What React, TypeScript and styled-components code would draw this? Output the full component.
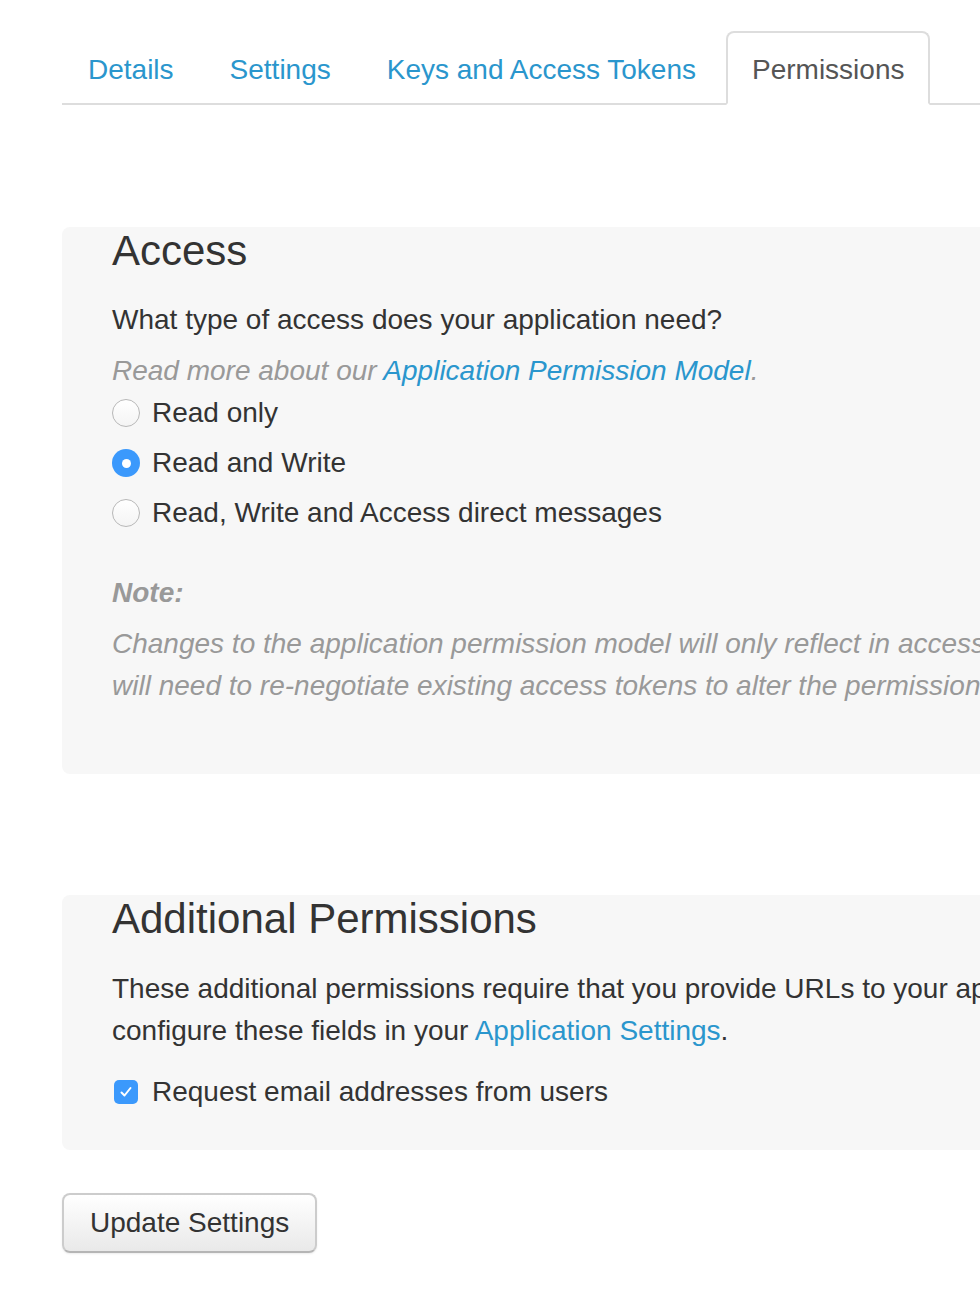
import React, { useState } from "react";
import styled, { createGlobalStyle } from "styled-components";

const GlobalStyle = createGlobalStyle`
  html, body {
    margin: 0;
    padding: 0;
    background: #fff;
    overflow: hidden;
  }
  body {
    font-family: "Liberation Sans", Arial, Helvetica, sans-serif;
    color: #333;
  }
`;

const Page = styled.div`
  width: 1500px;
  padding: 31px 0 60px 62px;
  box-sizing: border-box;
`;

const Tabs = styled.ul`
  display: flex;
  list-style: none;
  margin: 0;
  padding: 0;
  border-bottom: 2px solid #ddd;
`;

const Tab = styled.li<{ $active?: boolean }>`
  margin: 0 4px -2px 0;
  padding: 3px 24px 0;
  height: 67px;
  display: flex;
  align-items: center;
  font-size: 28px;
  border: 2px solid ${(p) => (p.$active ? "#ddd" : "transparent")};
  border-bottom-color: ${(p) => (p.$active ? "#fff" : "transparent")};
  border-radius: 8px 8px 0 0;
  background: ${(p) => (p.$active ? "#fff" : "transparent")};
  color: ${(p) => (p.$active ? "#555" : "#2a96cd")};
  cursor: pointer;
`;

const Panel = styled.section<{ $top: number; $bottom: number }>`
  margin-top: ${(p) => p.$top}px;
  background: #f7f7f7;
  border-radius: 8px;
  padding: 0 50px ${(p) => p.$bottom}px;
`;

const Heading = styled.h2`
  margin: 0;
  font-size: 42px;
  line-height: 48px;
  font-weight: normal;
  color: #333;
`;

const Text = styled.p<{ $gap?: number; $muted?: boolean }>`
  margin: ${(p) => p.$gap ?? 0}px 0 0;
  font-size: 28px;
  line-height: 42px;
  white-space: nowrap;
  color: ${(p) => (p.$muted ? "#999" : "#333")};
  font-style: ${(p) => (p.$muted ? "italic" : "normal")};
`;

const NoteTitle = styled.p`
  margin: 38px 0 0;
  font-size: 28px;
  line-height: 42px;
  font-style: italic;
  font-weight: bold;
  color: #999;
`;

const Link = styled.a`
  color: #2a96cd;
  text-decoration: none;
`;

const Option = styled.label<{ $gap: number; $space?: number }>`
  display: flex;
  align-items: center;
  gap: ${(p) => p.$space ?? 12}px;
  margin-top: ${(p) => p.$gap}px;
  height: 42px;
  font-size: 28px;
  color: #333;
  cursor: pointer;
`;

const Radio = styled.span<{ $on: boolean }>`
  width: 28px;
  height: 28px;
  box-sizing: border-box;
  border-radius: 50%;
  display: flex;
  align-items: center;
  justify-content: center;
  background: ${(p) => (p.$on ? "#3b99fc" : "linear-gradient(#fff, #f4f4f4)")};
  border: ${(p) => (p.$on ? "none" : "1.5px solid #b8b8b8")};
  &::after {
    content: "";
    width: 9px;
    height: 9px;
    border-radius: 50%;
    background: #fff;
    display: ${(p) => (p.$on ? "block" : "none")};
  }
`;

const Check = styled.span<{ $on: boolean }>`
  width: 24px;
  height: 24px;
  box-sizing: border-box;
  margin-left: 2px;
  border-radius: 5px;
  background: ${(p) => (p.$on ? "#3b99fc" : "#fff")};
  border: ${(p) => (p.$on ? "none" : "1.5px solid #b8b8b8")};
  display: flex;
  align-items: center;
  justify-content: center;
`;

const Button = styled.button`
  margin-top: 43px;
  height: 60px;
  padding: 0 26px;
  font-family: inherit;
  font-size: 28px;
  color: #333;
  background: linear-gradient(#fff, #e9e9e9);
  border: 2px solid #ccc;
  border-bottom-color: #b5b5b5;
  border-radius: 8px;
  box-shadow: 0 1px 2px rgba(0, 0, 0, 0.08);
  cursor: pointer;
`;

const options = [
  "Read only",
  "Read and Write",
  "Read, Write and Access direct messages",
];

export default function App() {
  const [access, setAccess] = useState(1);
  const [email, setEmail] = useState(true);

  return (
    <Page>
      <GlobalStyle />
      <Tabs>
        <Tab>Details</Tab>
        <Tab>Settings</Tab>
        <Tab>Keys and Access Tokens</Tab>
        <Tab $active>Permissions</Tab>
      </Tabs>

      <Panel $top={122} $bottom={67}>
        <Heading>Access</Heading>
        <Text $gap={24}>What type of access does your application need?</Text>
        <Text $gap={9} $muted>
          Read more about our <Link href="#">Application Permission Model</Link>.
        </Text>
        {options.map((o, i) => (
          <Option key={o} $gap={i === 0 ? 0 : 8} onClick={() => setAccess(i)}>
            <Radio $on={access === i} />
            {o}
          </Option>
        ))}
        <NoteTitle>Note:</NoteTitle>
        <Text $gap={9} $muted>
          Changes to the application permission model will only reflect in access tokens obtained after the permission model change is saved. You
          <br />
          will need to re-negotiate existing access tokens to alter the permission level associated with each of your application's users.
        </Text>
      </Panel>

      <Panel $top={121} $bottom={37}>
        <Heading>Additional Permissions</Heading>
        <Text $gap={25}>
          These additional permissions require that you provide URLs to your application's privacy policy and terms of service. You can
          <br />
          configure these fields in your <Link href="#">Application Settings</Link>.
        </Text>
        <Option $gap={19} $space={14} onClick={() => setEmail(!email)}>
          <Check $on={email}>
            {email && (
              <svg width="14" height="14" viewBox="0 0 14 14">
                <path d="M2.5 7.5 L5.5 10.5 L11.5 3" fill="none" stroke="#fff" strokeWidth="2" strokeLinecap="round" strokeLinejoin="round" />
              </svg>
            )}
          </Check>
          Request email addresses from users
        </Option>
      </Panel>

      <Button>Update Settings</Button>
    </Page>
  );
}
